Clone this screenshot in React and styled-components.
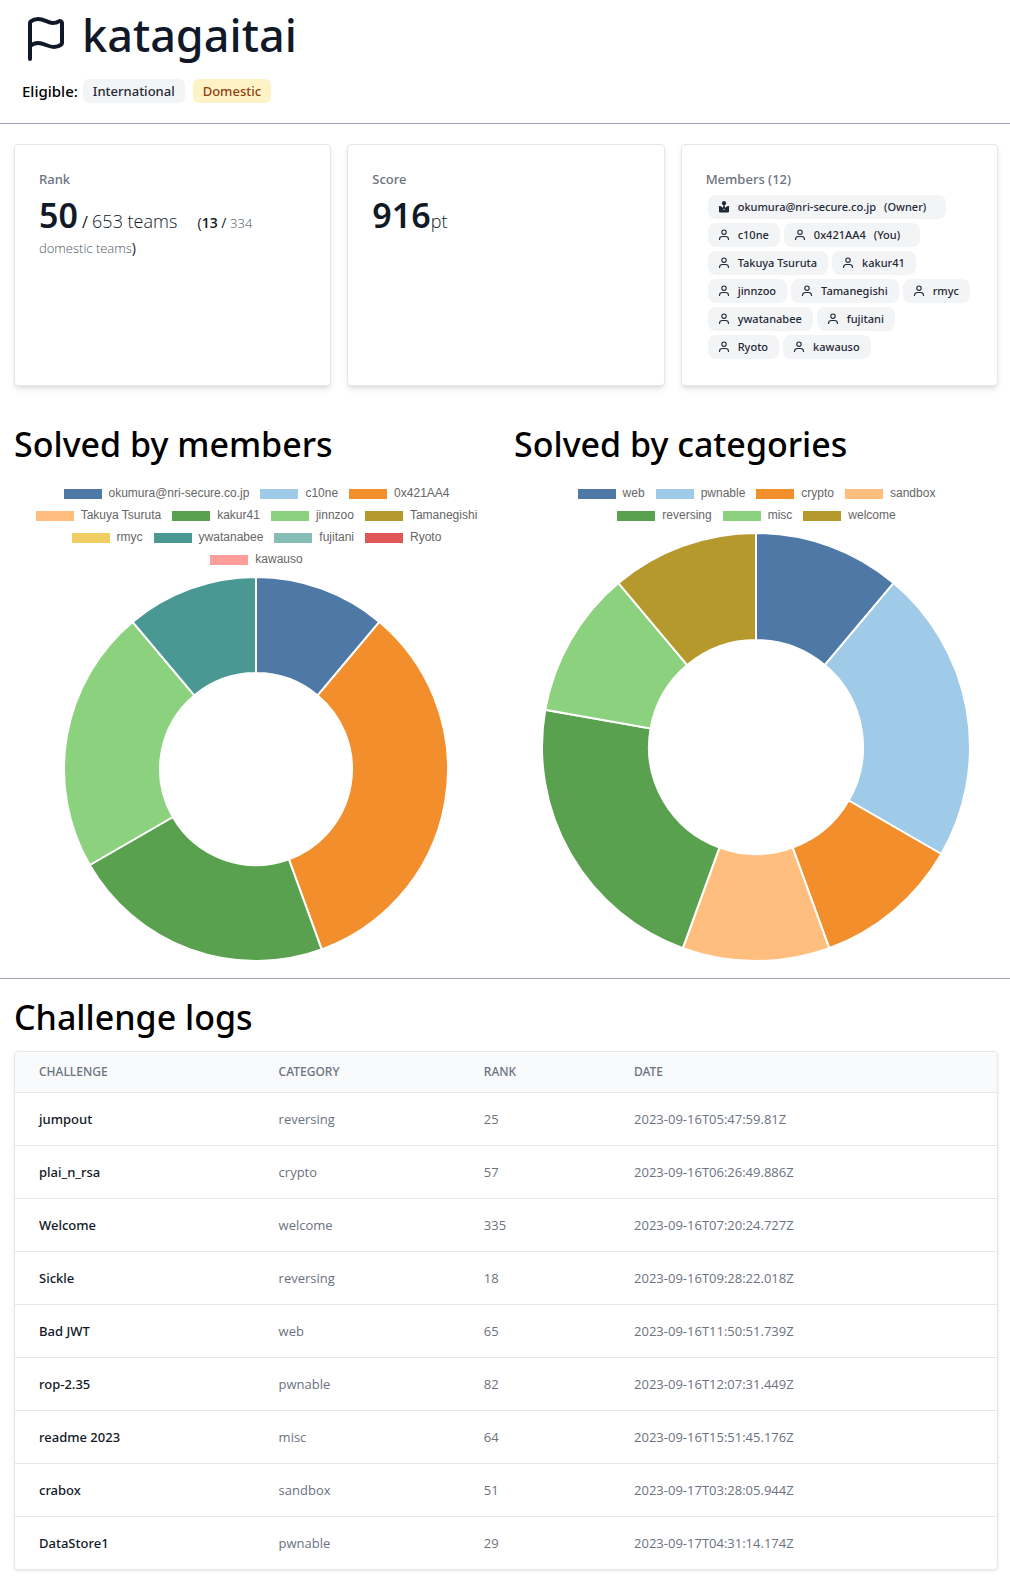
import React from "react";
import styled, { createGlobalStyle, css } from "styled-components";
import { Flag } from "lucide-react";

const GlobalStyle = createGlobalStyle`
  *, *::before, *::after { box-sizing: border-box; }
  body {
    margin: 0;
    background: #fff;
    color: #000;
    font-family: "Noto Sans", "Open Sans", sans-serif;
    font-size: 14px;
    line-height: 20px;
  }
  h1, h2, h3, p, ul { margin: 0; padding: 0; font-weight: 500; }
  ul { list-style: none; }
`;

const Header = styled.header`
  display: flex;
  flex-direction: column;
  gap: 16px;
  padding: 15px 22px 20px;
  border-bottom: 1px solid #9ca3af;
`;

const TitleRow = styled.div`
  display: flex;
  align-items: flex-start;
  gap: 12px;
  color: #111827;
`;

const Title = styled.h1`
  font-size: 45px;
  line-height: 40px;
`;

const EligibleRow = styled.div`
  display: flex;
  align-items: center;
  gap: 8px;
`;

const EligibleLabel = styled.span`
  font-size: 15px;
  font-weight: 500;
  margin-right: -3px;
`;

const badgeTones = {
  gray: css`
    background: #f3f4f6;
    color: #1f2937;
  `,
  yellow: css`
    background: #fef3c7;
    color: #92400e;
  `,
};

const Badge = styled.span`
  padding: 2px 10px;
  border-radius: 6px;
  font-size: 13px;
  font-weight: 500;
  line-height: 20px;
  ${(p) => badgeTones[p.$tone]}
`;

const Section = styled.section`
  padding: ${(p) => p.$pad};
`;

const Cards = styled.div`
  display: grid;
  grid-template-columns: repeat(3, 1fr);
  gap: 16px;
`;

const Card = styled.article`
  padding: 24px;
  border: 1px solid #e5e7eb;
  border-radius: 4px;
  background: #fff;
  box-shadow: 0 4px 6px -1px rgba(0, 0, 0, 0.1), 0 2px 4px -2px rgba(0, 0, 0, 0.1);
`;

const CardLabel = styled.h3`
  margin-bottom: 4px;
  color: #6b7280;
  font-size: 13px;
  line-height: 20px;
`;

const Stat = styled.p`
  color: #111827;
  font-family: "Open Sans", sans-serif;
  font-size: 16px;
  font-weight: 400;
  line-height: 20px;
`;

const Big = styled.strong`
  font-family: "Noto Sans", sans-serif;
  font-size: 34px;
  font-weight: 600;
  line-height: 44px;
`;

const Light = styled.span`
  font-size: 18px;
  font-weight: 300;
`;

const Aside = styled.span`
  margin-left: 16px;
  font-size: 14px;
`;

const Muted = styled.span`
  color: #4b5563;
  font-size: 13px;
  font-weight: 300;
`;

const Strong = styled.strong`
  font-weight: 600;
`;

const MemberList = styled.div`
  display: flex;
  flex-direction: column;
  gap: 4px;
  padding: 2px;
`;

const MemberRow = styled.ul`
  display: flex;
  flex-wrap: wrap;
  gap: 4px;
`;

const Member = styled.li`
  display: flex;
  align-items: center;
  gap: 8px;
  height: 24px;
  padding: 0 ${(p) => (p.$tagged ? 20 : 11)}px 0 10px;
  border-radius: 8px;
  background: #f3f4f6;
  color: #1f2937;
  font-size: 11px;
  font-weight: 500;
  white-space: nowrap;
`;

const Charts = styled.div`
  display: grid;
  grid-template-columns: repeat(2, 1fr);
  gap: 16px;
`;

const Heading = styled.h2`
  margin-bottom: ${(p) => p.$gap}px;
  font-size: 34px;
  line-height: 40px;
`;

const Figure = styled.div`
  display: flex;
  flex-direction: column;
  gap: 11px;
  aspect-ratio: 1;
  padding-top: 11px;
`;

const Legend = styled.ul`
  display: flex;
  flex-wrap: wrap;
  justify-content: center;
  gap: 10px;
  padding: 0 16px;
`;

const LegendItem = styled.li`
  display: flex;
  align-items: flex-start;
  gap: 6px;
  height: 12px;
  color: #666;
  font: 12px/10px "Liberation Sans", Arial, sans-serif;
  white-space: nowrap;
`;

const Swatch = styled.span`
  width: 40px;
  height: 12px;
  border: 1px solid #fff;
  background: ${(p) => p.$color};
`;

const Ring = styled.svg`
  flex: 1;
  width: 100%;
  min-height: 0;
`;

const TableFrame = styled.div`
  overflow: hidden;
  border: 1px solid #e5e7eb;
  border-radius: 4px;
  box-shadow: 0 1px 3px rgba(0, 0, 0, 0.1);
`;

const Table = styled.table`
  width: 100%;
  table-layout: fixed;
  border-collapse: collapse;
  text-align: left;

  th, td { padding: 16px 24px; }
  tr + tr { border-top: 1px solid #e5e7eb; }
`;

const Col = styled.col`
  width: ${(p) => p.$width};
`;

const Th = styled.th`
  && { padding: 12px 24px; }
  background: #f9fafb;
  border-bottom: 1px solid #e5e7eb;
  color: #6b7280;
  font-size: 12px;
  font-weight: 500;
  line-height: 16px;
  text-transform: uppercase;
`;

const NameCell = styled.td`
  color: #111827;
  font-size: 13px;
  font-weight: 500;
`;

const Cell = styled.td`
  color: #6b7280;
  font-family: "Open Sans", sans-serif;
  font-size: 13px;
`;

const members = [
  { name: "okumura@nri-secure.co.jp", tag: "(Owner)", owner: true, color: "#4e79a7", solved: 1, row: 0 },
  { name: "c10ne", color: "#a0cbe8", solved: 0, row: 1 },
  { name: "0x421AA4", tag: "(You)", color: "#f28e2b", solved: 3, row: 1 },
  { name: "Takuya Tsuruta", color: "#ffbe7d", solved: 0, row: 2 },
  { name: "kakur41", color: "#59a14f", solved: 2, row: 2 },
  { name: "jinnzoo", color: "#8cd17d", solved: 2, row: 3 },
  { name: "Tamanegishi", color: "#b6992d", solved: 0, row: 3 },
  { name: "rmyc", color: "#f1ce63", solved: 0, row: 3 },
  { name: "ywatanabee", color: "#499894", solved: 1, row: 4 },
  { name: "fujitani", color: "#86bcb6", solved: 0, row: 4 },
  { name: "Ryoto", color: "#e15759", solved: 0, row: 5 },
  { name: "kawauso", color: "#ff9d9a", solved: 0, row: 5 },
];

const memberRows = [0, 1, 2, 3, 4, 5].map((row) => members.filter((member) => member.row === row));

const categories = [
  { name: "web", color: "#4e79a7", solved: 1 },
  { name: "pwnable", color: "#a0cbe8", solved: 2 },
  { name: "crypto", color: "#f28e2b", solved: 1 },
  { name: "sandbox", color: "#ffbe7d", solved: 1 },
  { name: "reversing", color: "#59a14f", solved: 2 },
  { name: "misc", color: "#8cd17d", solved: 1 },
  { name: "welcome", color: "#b6992d", solved: 1 },
];

const logs = [
  ["jumpout", "reversing", 25, "2023-09-16T05:47:59.81Z"],
  ["plai_n_rsa", "crypto", 57, "2023-09-16T06:26:49.886Z"],
  ["Welcome", "welcome", 335, "2023-09-16T07:20:24.727Z"],
  ["Sickle", "reversing", 18, "2023-09-16T09:28:22.018Z"],
  ["Bad JWT", "web", 65, "2023-09-16T11:50:51.739Z"],
  ["rop-2.35", "pwnable", 82, "2023-09-16T12:07:31.449Z"],
  ["readme 2023", "misc", 64, "2023-09-16T15:51:45.176Z"],
  ["crabox", "sandbox", 51, "2023-09-17T03:28:05.944Z"],
  ["DataStore1", "pwnable", 29, "2023-09-17T04:31:14.174Z"],
];

const PersonIcon = () => (
  <svg width="12" height="12" viewBox="0 0 12 12" fill="none" stroke="currentColor" strokeWidth="1.1" aria-hidden="true">
    <circle cx="6" cy="3.2" r="2.2" />
    <path d="M1.5 11V10.4C1.5 8.6 3 7.5 4.6 7.5H7.4C9 7.5 10.5 8.6 10.5 10.4V11" />
  </svg>
);

const OwnerIcon = () => (
  <svg width="12" height="12" viewBox="0 0 12 12" fill="currentColor" aria-hidden="true">
    <circle cx="6" cy="2.2" r="2.1" />
    <path d="M1 5C2.6 5 3.9 5.6 4.9 6.9L5.4 4H6.6L7.1 6.9C8.1 5.6 9.4 5 11 5V10.4Q11 11.4 10 11.4H2Q1 11.4 1 10.4Z" />
    <circle cx="6" cy="8.4" r=".6" fill="#f3f4f6" />
  </svg>
);

const point = (turn, radius) => {
  const angle = turn * 2 * Math.PI;
  return `${Math.sin(angle) * radius} ${-Math.cos(angle) * radius}`;
};

function Doughnut({ label, data }) {
  const total = data.reduce((sum, item) => sum + item.solved, 0);
  let solved = 0;
  const slices = data
    .filter((item) => item.solved > 0)
    .map((item) => {
      const from = solved / total;
      solved += item.solved;
      const to = solved / total;
      const large = to - from > 0.5 ? 1 : 0;
      return {
        ...item,
        d: `M${point(from, 100)}A100 100 0 ${large} 1 ${point(to, 100)}L${point(to, 50)}A50 50 0 ${large} 0 ${point(from, 50)}Z`,
      };
    });

  return (
    <Figure>
      <Legend>
        {data.map((item) => (
          <LegendItem key={item.name}>
            <Swatch $color={item.color} />
            {item.name}
          </LegendItem>
        ))}
      </Legend>
      <Ring viewBox="-100 -100 200 200" role="img" aria-label={label}>
        {slices.map((slice) => (
          <path key={slice.name} d={slice.d} fill={slice.color} stroke="#fff" strokeWidth="2" vectorEffect="non-scaling-stroke" />
        ))}
      </Ring>
    </Figure>
  );
}

const LogSection = styled(Section)`
  border-top: 1px solid #9ca3af;
`;

function Logs() {
  return (
    <LogSection $pad="18px 12px 9px 14px">
      <Heading $gap={14}>Challenge logs</Heading>
      <TableFrame>
        <Table>
          <colgroup>
            <Col $width="24.4%" />
            <Col $width="20.9%" />
            <Col $width="15.3%" />
            <Col />
          </colgroup>
          <thead>
            <tr>
              <Th scope="col">Challenge</Th>
              <Th scope="col">Category</Th>
              <Th scope="col">Rank</Th>
              <Th scope="col">Date</Th>
            </tr>
          </thead>
          <tbody>
            {logs.map(([name, category, rank, date]) => (
              <tr key={name}>
                <NameCell>{name}</NameCell>
                <Cell>{category}</Cell>
                <Cell>{rank}</Cell>
                <Cell>{date}</Cell>
              </tr>
            ))}
          </tbody>
        </Table>
      </TableFrame>
    </LogSection>
  );
}

export default function App() {
  return (
    <>
      <GlobalStyle />
      <Header>
        <TitleRow>
          <Flag size={48} aria-hidden="true" />
          <Title>katagaitai</Title>
        </TitleRow>
        <EligibleRow>
          <EligibleLabel>Eligible:</EligibleLabel>
          <Badge $tone="gray">International</Badge>
          <Badge $tone="yellow">Domestic</Badge>
        </EligibleRow>
      </Header>

      <main>
        <Section $pad="20px 12px 0 14px">
          <Cards>
            <Card>
              <CardLabel>Rank</CardLabel>
              <Stat>
                <Big>50</Big> / <Light>653 teams</Light>{" "}
                <Aside>
                  (<Strong>13</Strong> / <Muted>334</Muted> <Muted>domestic teams</Muted>)
                </Aside>
              </Stat>
            </Card>
            <Card>
              <CardLabel>Score</CardLabel>
              <Stat>
                <Big>916</Big>
                <Light>pt</Light>
              </Stat>
            </Card>
            <Card>
              <CardLabel>Members ({members.length})</CardLabel>
              <MemberList>
                {memberRows.map((row) => (
                  <MemberRow key={row[0].name}>
                    {row.map((member) => (
                      <Member key={member.name} $tagged={Boolean(member.tag)}>
                        {member.owner ? <OwnerIcon /> : <PersonIcon />}
                        <span>{member.name}</span>
                        {member.tag && <span>{member.tag}</span>}
                      </Member>
                    ))}
                  </MemberRow>
                ))}
              </MemberList>
            </Card>
          </Cards>
        </Section>

        <Section $pad="38px 12px 17px 14px">
          <Charts>
            <div>
              <Heading $gap={13}>Solved by members</Heading>
              <Doughnut label="Solved by members" data={members} />
            </div>
            <div>
              <Heading $gap={13}>Solved by categories</Heading>
              <Doughnut label="Solved by categories" data={categories} />
            </div>
          </Charts>
        </Section>

        <Logs />
      </main>
    </>
  );
}
